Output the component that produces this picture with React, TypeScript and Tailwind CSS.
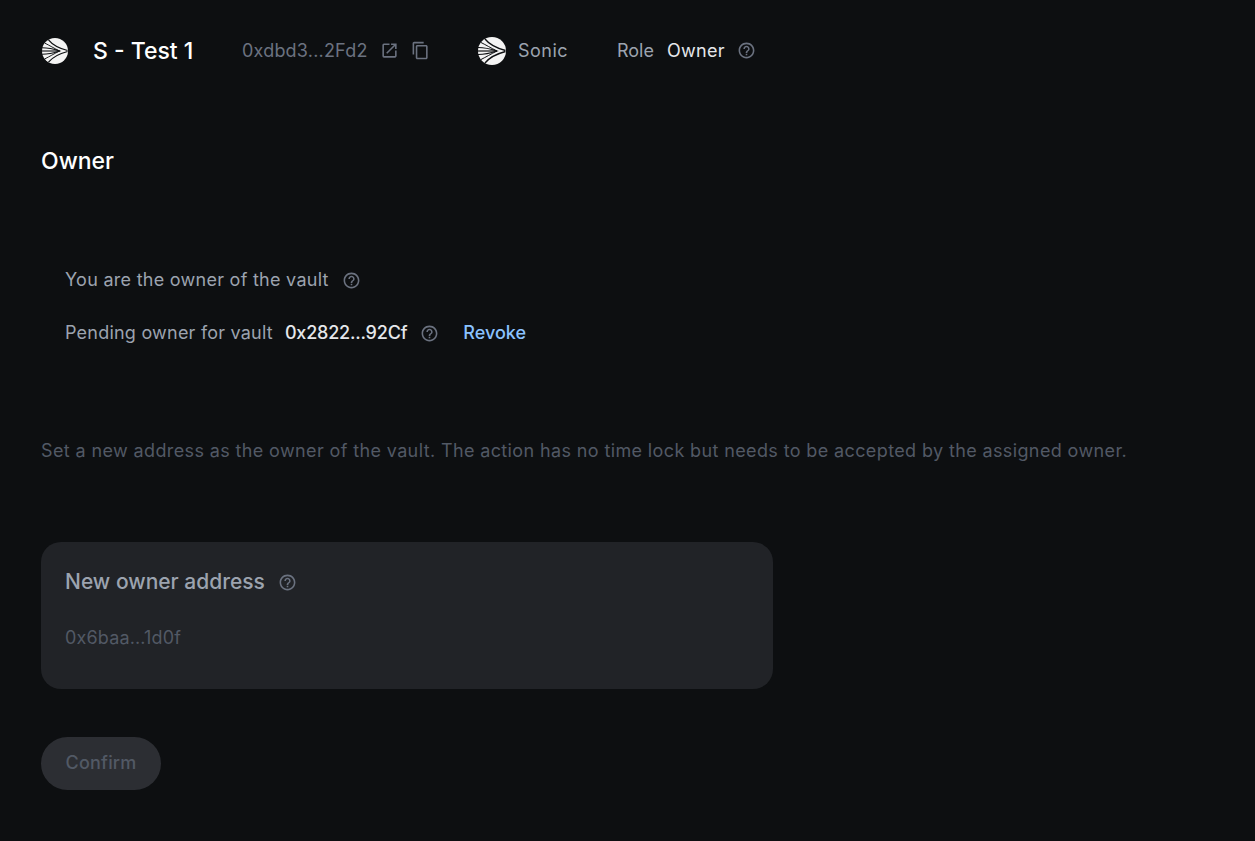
import React from 'react';
import { MdOutlineOpenInNew, MdOutlineContentCopy, MdHelpOutline } from 'react-icons/md';

const SonicLogo = ({ size }: { size: number }) => (
  <svg width={size} height={size} viewBox="0 0 28 28" className="shrink-0">
    <circle cx="14" cy="14" r="14" fill="#f4f4f4" />
    <path d="M7 2C11 7 18 11 27.500 13.500M7 26C11 21 18 17 27.500 14.500" stroke="#0e1012" strokeWidth="1.300" fill="none" />
    <path d="M0 10.500C7 10.500 13 12 19 14C13 16 7 17.500 0 17.500" stroke="#0e1012" strokeWidth="1.200" fill="none" />
    <path d="M0 14H19" stroke="#0e1012" strokeWidth="1.200" fill="none" />
    <path d="M3 5.500C8 8 13 11 19 14C13 17 8 20 3 22.500" stroke="#0e1012" strokeWidth="1" fill="none" />
  </svg>
);

const Help = ({ className = '' }: { className?: string }) => (
  <MdHelpOutline size={19} className={`text-[#6b7280] shrink-0 ${className}`} />
);

export default function App() {
  return (
    <div className="min-h-[841px] bg-[#0d0f11] px-[41px] font-['Inter','Noto_Sans',sans-serif] text-[#9ca3af]">
      <header className="flex h-[101px] items-center text-[18px]">
        <span className="ml-px"><SonicLogo size={26} /></span>
        <h1 className="ml-[25px] w-[149px] pt-px text-[23px] font-medium text-white">S - Test 1</h1>
        <span className="w-[138px] tracking-[0.2px] text-[#6b7280]">0xdbd3...2Fd2</span>
        <MdOutlineOpenInNew size={19} className="text-[#6b7280]" />
        <MdOutlineContentCopy size={19} className="ml-[12px] text-[#6b7280]" />
        <span className="ml-[48px]"><SonicLogo size={28} /></span>
        <span className="ml-[12px] w-[99px] tracking-[0.5px]">Sonic</span>
        <span>Role</span>
        <span className="ml-[13px] tracking-[0.3px] text-[#e5e7eb]">Owner</span>
        <Help className="ml-[12px]" />
      </header>

      <h2 className="mt-[46px] text-[23px] leading-7 font-medium text-white">Owner</h2>

      <div className="mt-[93px] flex flex-col gap-[29px] px-6 text-[18px] leading-6">
        <div className="flex items-center">
          <span className="tracking-[0.27px]">You are the owner of the vault</span>
          <Help className="ml-[13px]" />
        </div>
        <div className="flex items-center">
          <span className="tracking-[0.22px]">Pending owner for vault</span>
          <span className="ml-[12px] font-medium tracking-[-0.2px] text-[#e5e7eb]">0x2822...92Cf</span>
          <Help className="ml-[13px]" />
          <button className="ml-[24px] font-medium text-[#8ac2ff]">Revoke</button>
        </div>
      </div>

      <p className="mt-[94px] text-[18px] leading-6 tracking-[0.375px] text-[#525965]">
        Set a new address as the owner of the vault. The action has no time lock but needs to be accepted by the assigned owner.
      </p>

      <div className="mt-[79px] h-[147px] w-[732px] rounded-[20px] bg-[#212327] px-6 pt-[26px]">
        <div className="flex items-center text-[21px] leading-7 font-medium">
          <span>New owner address</span>
          <Help className="ml-[13px]" />
        </div>
        <input
          readOnly
          placeholder="0x6baa...1d0f"
          className="mt-[28px] block w-full bg-transparent text-[18px] leading-7 tracking-[0.15px] outline-none placeholder:text-[#525965]"
        />
      </div>

      <button className="mt-[48px] block h-[53px] w-[120px] rounded-full bg-[#2c2e33] pb-[2px] text-[18px] font-medium tracking-[0.2px] text-[#525965]">
        Confirm
      </button>
    </div>
  );
}
